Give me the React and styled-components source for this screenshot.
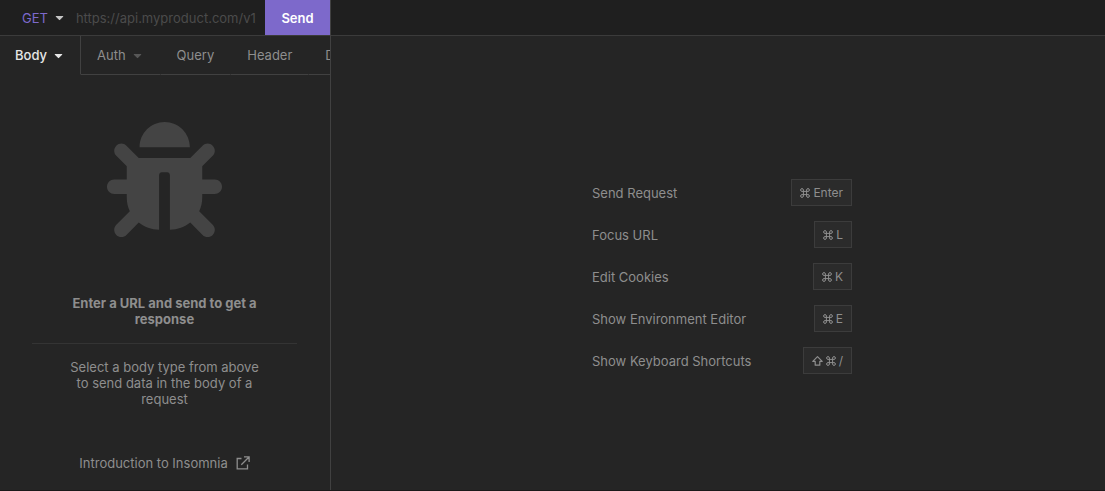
import React from "react";
import styled, { createGlobalStyle } from "styled-components";
import { FaBug, FaCaretDown } from "react-icons/fa";

const Global = createGlobalStyle`
  *, *::before, *::after { box-sizing: border-box; }
  html, body, #root { height: 100%; }
  body {
    margin: 0;
    background: #252525;
    color: #8e8e8e;
    font: 13px/16px Inter, "Liberation Sans", sans-serif;
  }
  button, input { font: inherit; color: inherit; border: 0; background: none; margin: 0; padding: 0; }
`;

const Layout = styled.div`
  display: grid;
  grid-template-columns: minmax(0, 331fr) minmax(0, 774fr);
  min-height: 100%;
  border-bottom: 1px solid #1a1a1a;
`;

const RequestPane = styled.section`
  display: flex;
  flex-direction: column;
  border-right: 1px solid #414141;
`;

const ResponsePane = styled.section`
  display: flex;
  flex-direction: column;
`;

const Bar = styled.header`
  display: flex;
  height: 36px;
  flex: none;
  background: #1f1f1f;
  border-bottom: 1px solid #3b3b3b;
`;

const MethodButton = styled.button`
  display: flex;
  align-items: center;
  gap: 5px;
  padding: 0 10px 0 22px;
  color: #7d69cb;
  svg { color: #c4c4c4; }
`;

const UrlInput = styled.input`
  flex: 1;
  min-width: 0;
  outline: none;
  margin-right: 9px;
  &::placeholder { color: #4b4b4b; opacity: 1; }
`;

const SendButton = styled.button`
  width: 65px;
  height: 35px;
  background: #7d69cb;
  color: #fff;
  font-weight: 600;
`;

const Tabs = styled.div`
  display: flex;
  height: 39px;
  flex: none;
  overflow: hidden;
`;

const Tab = styled.button`
  display: flex;
  align-items: center;
  gap: 5px;
  flex: none;
  padding: ${(p) => (p.$active ? "0 15px" : "0 16px")};
  color: ${(p) => (p.$active ? "#e6e6e6" : "#8e8e8e")};
  font-weight: ${(p) => (p.$active ? 500 : 400)};
  border-right: 1px solid ${(p) => (p.$active ? "#414141" : "transparent")};
  border-bottom: 1px solid ${(p) => (p.$active ? "transparent" : "#414141")};
  svg { color: ${(p) => (p.$active ? "#e6e6e6" : "#575757")}; }
`;

const Empty = styled.div`
  display: flex;
  flex-direction: column;
  align-items: center;
  padding: 47px 33px 0 32px;
  text-align: center;
  > svg { color: #444; }
`;

const Title = styled.h2`
  margin: 58px 0 0;
  padding: 0 32px 16px;
  font-size: 13px;
  line-height: 16px;
  font-weight: 700;
`;

const Divider = styled.hr`
  width: 100%;
  margin: 0;
  border: 0;
  border-top: 1px solid #343434;
`;

const Hint = styled.p`
  margin: 15px 0 48px;
  padding: 0 32px;
`;

const DocLink = styled.a`
  display: flex;
  align-items: center;
  gap: 8px;
  color: inherit;
  text-decoration: none;
`;

const Center = styled.div`
  flex: 1;
  display: flex;
  align-items: center;
  justify-content: center;
  padding: 27px 8px 0 16px;
`;

const Shortcuts = styled.table`
  width: 260px;
  border-collapse: collapse;
  td { padding: 0; height: 42px; }
  td:last-child { text-align: right; }
`;

const Keys = styled.kbd`
  display: inline-flex;
  align-items: center;
  gap: 3px;
  height: 27px;
  padding: 0 8px;
  font: 12px/16px Inter, "Liberation Sans", sans-serif;
  background: #2b2b2b;
  border: 1px solid #3c3c3c;
`;

const Command = () => (
  <svg width="10" height="10" viewBox="0 0 10 10" fill="none" stroke="currentColor" role="img" aria-label="Command">
    <path d="M3.4 3.4V2A1.4 1.4 0 1 0 2 3.4H8A1.4 1.4 0 1 0 6.6 2V8A1.4 1.4 0 1 0 8 6.6H2A1.4 1.4 0 1 0 3.4 8Z" />
  </svg>
);

const Shift = () => (
  <svg width="11" height="10" viewBox="0 0 11 10" fill="none" stroke="currentColor" strokeWidth="1.2" strokeLinejoin="round" role="img" aria-label="Shift">
    <path d="M5.5 .7 10.2 5.4H7.8V9.2H3.2V5.4H.8Z" />
  </svg>
);

const External = () => (
  <svg width="14" height="14" viewBox="0 0 14 14" fill="none" stroke="currentColor" strokeWidth="1.3" aria-hidden="true">
    <path d="M5.5 2.5H1.2V12.8H11.5V8.5M8 .9H13.1V6M13 1 5.3 8.7" />
  </svg>
);

const shortcuts = [
  ["Send Request", <Command key="c" />, "Enter"],
  ["Focus URL", <Command key="c" />, "L"],
  ["Edit Cookies", <Command key="c" />, "K"],
  ["Show Environment Editor", <Command key="c" />, "E"],
  ["Show Keyboard Shortcuts", <Shift key="s" />, <Command key="c" />, "/"],
];

export default function App() {
  return (
    <>
      <Global />
      <Layout>
        <RequestPane>
          <Bar>
            <MethodButton>GET <FaCaretDown size={13} /></MethodButton>
            <UrlInput aria-label="Request URL" placeholder="https://api.myproduct.com/v1/users" />
            <SendButton>Send</SendButton>
          </Bar>
          <Tabs role="tablist">
            <Tab role="tab" aria-selected="true" $active>Body <FaCaretDown size={13} /></Tab>
            <Tab role="tab">Auth <FaCaretDown size={13} /></Tab>
            <Tab role="tab">Query</Tab>
            <Tab role="tab">Header</Tab>
            <Tab role="tab">Docs</Tab>
          </Tabs>
          <Empty>
            <FaBug size={115} />
            <Title>Enter a URL and send to get a response</Title>
            <Divider />
            <Hint>Select a body type from above to send data in the body of a request</Hint>
            <DocLink href="#introduction">Introduction to Insomnia <External /></DocLink>
          </Empty>
        </RequestPane>
        <ResponsePane>
          <Bar />
          <Center>
            <Shortcuts>
              <tbody>
                {shortcuts.map(([label, ...keys]) => (
                  <tr key={label}>
                    <td>{label}</td>
                    <td><Keys>{keys}</Keys></td>
                  </tr>
                ))}
              </tbody>
            </Shortcuts>
          </Center>
        </ResponsePane>
      </Layout>
    </>
  );
}
